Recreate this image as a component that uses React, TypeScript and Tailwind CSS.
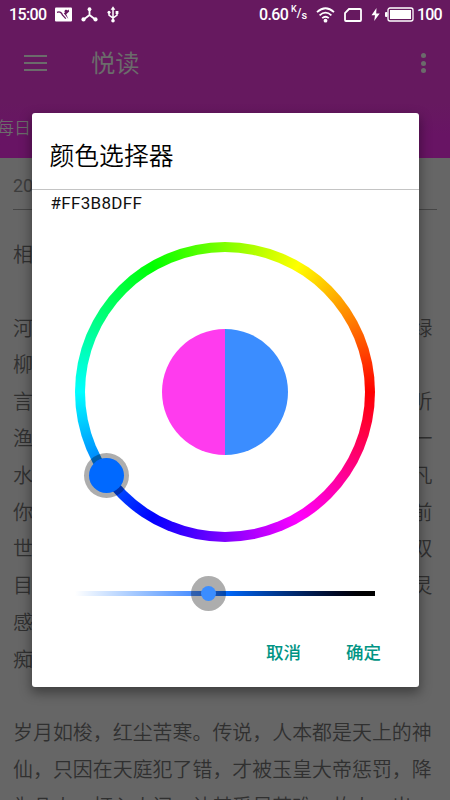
import React from "react";

const rows: [string, string][] = [
  ["相", ""],
  ["", ""],
  ["河", "绿"],
  ["柳", ""],
  ["言", "听"],
  ["渔", "一"],
  ["水", "凡"],
  ["你", "前"],
  ["世", "双"],
  ["目", "灵"],
  ["感", ""],
  ["痴", ""],
  ["", ""],
  ["岁月如梭，红尘苦寒。传说，人本都是天上的神", ""],
  ["仙，只因在天庭犯了错，才被玉皇大帝惩罚，降", ""],
  ["为凡人，打入人间，让其受尽苦难。故人，出", ""],
];

function StatusBar() {
  return (
    <div className="flex h-[29px] items-center pl-[9px] pr-[8px] font-[Roboto,sans-serif] text-[16px] leading-[29px] text-white">
      <span className="w-[46px] font-medium tracking-[-0.6px]">15:00</span>
      <svg className="h-[15px] w-[17px]" viewBox="0 0 17 15">
        <rect width="17" height="14" y=".5" rx="1" fill="#fff" />
        <path d="M2 5.4C5 4.2 6.6 5.6 7.6 8.2L10.8 11.6" fill="none" stroke="#66195f" strokeWidth="1.3" />
        <path d="M13.6 2.6L8.8 6.3L13.4 12L11.2 7.2L14.2 4.5Z" fill="#66195f" />
        <circle cx="11" cy="4.2" r="1.4" fill="#66195f" />
      </svg>
      <svg className="ml-[9px] h-[15px] w-[17px]" viewBox="0 0 17 15">
        <path d="M8.5 2V8L3 12.3M8.5 8L14 12.3" fill="none" stroke="#fff" strokeWidth="1.8" />
        <circle cx="8.5" cy="2.2" r="1.9" fill="#fff" />
        <circle cx="2.5" cy="12.4" r="2.1" fill="#fff" />
        <circle cx="14.5" cy="12.4" r="2.1" fill="#fff" />
      </svg>
      <svg className="ml-[9px] h-[17px] w-[12px]" viewBox="0 0 12 17">
        <path d="M6 2V15M2 6V9.2L6 12L10 9V6" fill="none" stroke="#fff" strokeWidth="1.5" />
        <path d="M6 .2L8.4 3.8H3.6Z" fill="#fff" />
        <circle cx="2" cy="6.3" r="1.5" fill="#fff" />
        <path d="M8.6 5H11.4V8H8.6Z" fill="#fff" />
        <circle cx="6" cy="14.7" r="1.8" fill="#fff" />
      </svg>
      <span className="ml-auto mr-[3px] w-[29px] font-medium tracking-[-0.6px]">0.60</span>
      <span className="mr-[9px] flex w-[16px] font-medium">
        <span className="-mt-[4px] text-[9px]">K</span>
        <span className="text-[12px]">/</span>
        <span className="mt-[2px] text-[11px]">s</span>
      </span>
      <svg className="mr-[9px] h-[16px] w-[19px]" viewBox="0 0 19 16">
        <path d="M1 5.2Q9.5-2.6 18 5.2M3.6 8.3Q9.5 2.9 15.4 8.3M6.2 11.2Q9.5 8.2 12.8 11.2" fill="none" stroke="#fff" strokeWidth="1.8" />
        <circle cx="9.5" cy="13.7" r="1.9" fill="#fff" />
      </svg>
      <svg className="mr-[9px] h-[14px] w-[18px]" viewBox="0 0 18 14">
        <path d="M5 1H16Q17 1 17 2V12Q17 13 16 13H2Q1 13 1 12V5Z" fill="none" stroke="#fff" strokeWidth="1.8" />
      </svg>
      <svg className="mr-[5px] h-[13px] w-[9px]" viewBox="0 0 9 13">
        <path d="M5.5 0L.5 7.2H4L3.2 13L8.7 5.5H5.2Z" fill="#fff" />
      </svg>
      <svg className="mr-[3px] h-[15px] w-[29px]" viewBox="0 0 29 15">
        <rect x="3" y="1" width="25" height="13" rx="2" fill="none" stroke="#fff" strokeWidth="1.3" />
        <rect x="5" y="3" width="21" height="9" fill="#fff" />
        <rect y="5" width="2.5" height="5" rx="1" fill="#fff" />
      </svg>
      <span className="w-[25px] font-medium tracking-[-0.8px]">100</span>
    </div>
  );
}

function AppHeader() {
  return (
    <header className="h-[158px] overflow-hidden bg-linear-to-b from-[#66195f] from-65% to-[#681464] to-85%">
      <StatusBar />
      <div className="flex h-[68px] items-center pl-[24px] pr-[24.5px] text-[#6b6b6b]">
        <div className="-mt-[1px] flex w-[23px] flex-col gap-[5px]">
          <span className="h-[2px] bg-[#6b6b6b]" />
          <span className="h-[2px] bg-[#6b6b6b]" />
          <span className="h-[2px] bg-[#6b6b6b]" />
        </div>
        <h1 className="ml-[44px] mt-[2px] text-[24.3px]">悦读</h1>
        <div className="ml-auto flex flex-col gap-[2.5px]">
          <span className="size-[5px] rounded-full bg-[#6b6b6b]" />
          <span className="size-[5px] rounded-full bg-[#6b6b6b]" />
          <span className="size-[5px] rounded-full bg-[#6b6b6b]" />
        </div>
      </div>
      <div className="-ml-[3px] mt-[18px] text-[17px] font-[350] leading-[26px] text-[#6b6b6b]">每日</div>
    </header>
  );
}

function Article() {
  return (
    <main className="px-[13px] font-[350] text-[#303030]">
      <div className="h-[52px] border-b border-[#464646] pt-[14px] text-[18px] font-normal leading-[28px] text-[#3d3d3d]">
        20
      </div>
      <div className="mt-[27px] font-[Roboto,'Noto_Sans_CJK_SC_DemiLight','Noto_Sans_CJK_SC',sans-serif] text-[19.95px] leading-[36.8px]">
        {rows.map(([left, right], i) => (
          <div key={i} className="flex h-[36.8px] justify-between whitespace-nowrap pr-[4.5px]">
            <span>{left}</span>
            <span>{right}</span>
          </div>
        ))}
      </div>
    </main>
  );
}

function ColorWheel() {
  return (
    <div className="relative mx-auto mt-[25px] grid size-[300px] place-items-center rounded-full bg-[conic-gradient(from_90deg,#f00,#f0f,#00f,#0ff,#0f0,#ff0,#f00)]">
      <div className="grid size-[280px] place-items-center rounded-full bg-white">
        <div className="flex size-[126px] overflow-hidden rounded-full">
          <span className="w-1/2 bg-[#ff3bee]" />
          <span className="w-1/2 bg-[#3b8dff]" />
        </div>
      </div>
      <div className="absolute left-[9px] top-[210.5px] grid size-[45px] place-items-center rounded-full bg-black/32">
        <div className="size-[35px] rounded-full bg-[#0069ff]" />
      </div>
    </div>
  );
}

function Slider() {
  return (
    <div className="relative mx-auto mt-[49px] h-[5px] w-[300px] bg-linear-to-r from-white via-[#0069ff] to-black">
      <div className="absolute -top-[15px] left-[115.5px] grid size-[35px] place-items-center rounded-full bg-black/32">
        <div className="size-[15px] rounded-full bg-[#3b8dff]" />
      </div>
    </div>
  );
}

export default function App() {
  return (
    <div className="relative h-[800px] w-[450px] overflow-hidden bg-[#666] font-[Roboto,'Noto_Sans_CJK_SC',sans-serif]">
      <AppHeader />
      <Article />
      <div className="absolute left-[31.5px] top-[113px] h-[574px] w-[387.5px] rounded-[3px] bg-white shadow-[0_5px_12px_1px_rgba(0,0,0,0.38)]">
        <h2 className="h-[77px] border-b-[1.5px] border-[#c4c4c4] pl-[18px] pt-[26px] font-[Roboto,'Noto_Sans_CJK_SC_DemiLight','Noto_Sans_CJK_SC',sans-serif] text-[24.8px] font-[350] leading-[36px] text-black">
          颜色选择器
        </h2>
        <p className="pl-[19px] pt-[1px] text-[17px] leading-[25px] tracking-[0.3px] text-[#111]">#FF3B8DFF</p>
        <div className="-mt-px pt-[2px]">
          <ColorWheel />
        </div>
        <Slider />
        <div className="mt-[44px] flex justify-end gap-[45px] pr-[38px] text-[17.5px] font-medium leading-[26px] text-[#009484]">
          <button>取消</button>
          <button>确定</button>
        </div>
      </div>
    </div>
  );
}
